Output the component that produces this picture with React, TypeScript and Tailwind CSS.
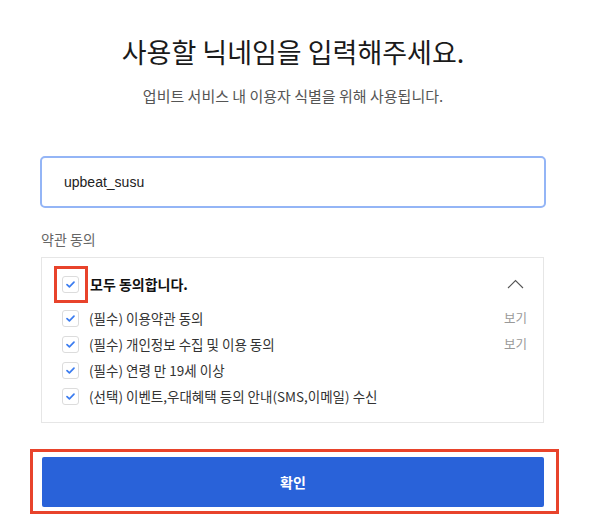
import React from 'react';

const font = "font-['Noto_Sans_CJK_KR',sans-serif]";

function Check() {
  return <span className="w-[17px] h-[17px] flex-shrink-0 flex items-center justify-center rounded-[3px] border border-[#dcdcdc] bg-white">
      <svg width="11" height="11" viewBox="0 0 11 11" fill="none">
        <path d="M2 5.6l2.4 2.3L9 3.2" stroke="#3b7cf0" strokeWidth="1.7" strokeLinecap="round" strokeLinejoin="round" />
      </svg>
    </span>;
}

export default function App() {
  const terms = [{
    label: '(필수) 이용약관 동의',
    view: true
  }, {
    label: '(필수) 개인정보 수집 및 이용 동의',
    view: true
  }, {
    label: '(필수) 연령 만 19세 이상',
    view: false
  }, {
    label: '(선택) 이벤트,우대혜택 등의 안내(SMS,이메일) 수신',
    view: false
  }];
  return <div className={`relative w-[600px] h-[529px] bg-white overflow-hidden ${font}`}>
      <div className="ml-[40px] w-[506px] flex flex-col">
        <h1 className="pt-[37px] text-center text-[27px] leading-[30px] text-[#1a1a1a] font-normal">
          사용할 닉네임을 입력해주세요.
        </h1>
        <p className="mt-[19px] text-center text-[15px] leading-[20px] text-[#555]">
          업비트 서비스 내 이용자 식별을 위해 사용됩니다.
        </p>

        <div className="mt-[50px] h-[52px] rounded-[5px] border-2 border-[#94b5f6] flex items-center pl-[22px]">
          <span className="font-['Liberation_Sans',sans-serif] text-[14px] text-[#222]">upbeat_susu</span>
        </div>

        <div className="mt-[21px] ml-[1px] text-[14px] leading-[20px] text-[#666]">약관 동의</div>

        <div className="mt-[8px] ml-[1px] w-[503px] border border-[#e6e6e6] pt-[11px] pb-[13px] pl-[20px] pr-[16px]">
          <div className="h-[30px] flex items-center">
            <Check />
            <span className="ml-[11px] text-[14px] font-bold text-[#111]">모두 동의합니다.</span>
            <svg className="ml-auto mr-[3px]" width="17" height="10" viewBox="0 0 17 10" fill="none">
              <path d="M1 9l7.5-7.5L16 9" stroke="#555" strokeWidth="1.1" />
            </svg>
          </div>
          <div className="mt-[6px] flex flex-col">
            {terms.map((t, i) => <div key={i} className="h-[26px] flex items-center">
                <Check />
                <span className="ml-[10px] text-[13.5px] text-[#333]">{t.label}</span>
                {t.view && <span className="ml-auto text-[12.5px] text-[#999]">보기</span>}
              </div>)}
          </div>
        </div>

        <button className="mt-[34px] ml-[2px] w-[502px] h-[50px] rounded-[2px] bg-[#2962d9] text-white text-[14px] font-bold">
          확인
        </button>
      </div>

      <div className="absolute left-[54px] top-[266px] w-[34px] h-[37px] border-[3px] border-[#e8432b]" />
      <div className="absolute left-[30px] top-[449px] w-[529px] h-[65px] border-[3px] border-[#e8432b]" />
    </div>;
}
